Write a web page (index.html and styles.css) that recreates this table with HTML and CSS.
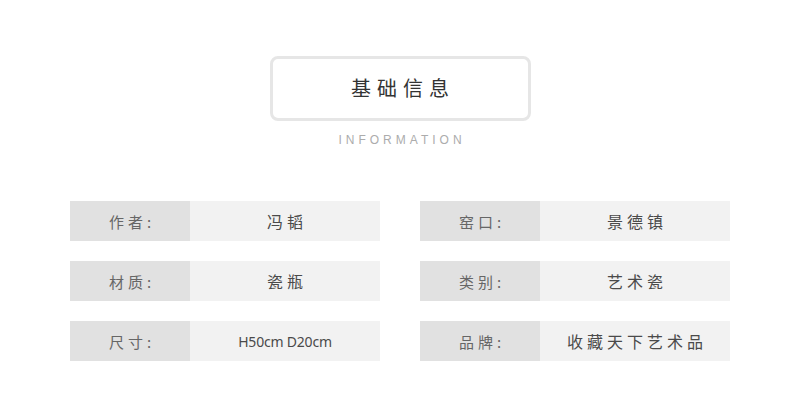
FILE: index.html
```html
<!DOCTYPE html>
<html lang="zh-CN">
<head>
    <meta charset="UTF-8">
    <meta name="viewport" content="width=device-width, initial-scale=1.0">
    <title>基础信息</title>
    <link rel="stylesheet" href="styles.css">
</head>
<body>
    <div id="basic-info">
        <div class="title-box">基础信息</div>
        <div class="subtitle">INFORMATION</div>
        <div class="info-grid">
            <div class="info-row">
                <div class="info-label">作者:</div>
                <div class="info-value">冯韬</div>
            </div>
            <div class="info-row">
                <div class="info-label">窑口:</div>
                <div class="info-value">景德镇</div>
            </div>
            <div class="info-row">
                <div class="info-label">材质:</div>
                <div class="info-value">瓷瓶</div>
            </div>
            <div class="info-row">
                <div class="info-label">类别:</div>
                <div class="info-value">艺术瓷</div>
            </div>
            <div class="info-row">
                <div class="info-label">尺寸:</div>
                <div class="info-value latin">H50cm D20cm</div>
            </div>
            <div class="info-row">
                <div class="info-label">品牌:</div>
                <div class="info-value">收藏天下艺术品</div>
            </div>
        </div>
    </div>
</body>
</html>
```

FILE: styles.css
```css
body {
    margin: 0;
    padding: 0;
    background: #fff;
    font-family: "Noto Sans CJK SC", "Noto Sans", sans-serif;
    color: #555;
}
#basic-info {
    padding-top: 56px;
}
.title-box {
    box-sizing: border-box;
    width: 261px;
    height: 65px;
    margin: 0 auto;
    border: 3px solid #e6e6e6;
    border-radius: 8px;
    display: flex;
    justify-content: center;
    align-items: center;
    font-size: 20px;
    letter-spacing: 6px;
    padding-left: 6px;
    padding-bottom: 3px;
    color: #333;
}
.subtitle {
    margin-top: 12px;
    text-align: center;
    font-family: "Liberation Sans", Arial, sans-serif;
    font-size: 12px;
    line-height: 14px;
    letter-spacing: 4px;
    padding-left: 4px;
    color: #acacac;
}
.info-grid {
    width: 660px;
    margin: 54px auto 0;
    display: grid;
    grid-template-columns: 310px 310px;
    column-gap: 40px;
    row-gap: 20px;
}
.info-row {
    display: flex;
    height: 40px;
}
.info-label {
    width: 120px;
    background: #e1e1e1;
    color: #666;
    font-size: 15px;
    letter-spacing: 4px;
    padding-left: 4px;
    box-sizing: border-box;
    display: flex;
    justify-content: center;
    align-items: center;
}
.info-value {
    flex: 1;
    background: #f2f2f2;
    color: #4a4a4a;
    font-size: 16px;
    letter-spacing: 4px;
    padding-left: 4px;
    display: flex;
    justify-content: center;
    align-items: center;
}
.info-value.latin {
    font-family: "Noto Sans", sans-serif;
    font-size: 14px;
    letter-spacing: -0.2px;
    padding-left: 0;
}
```
